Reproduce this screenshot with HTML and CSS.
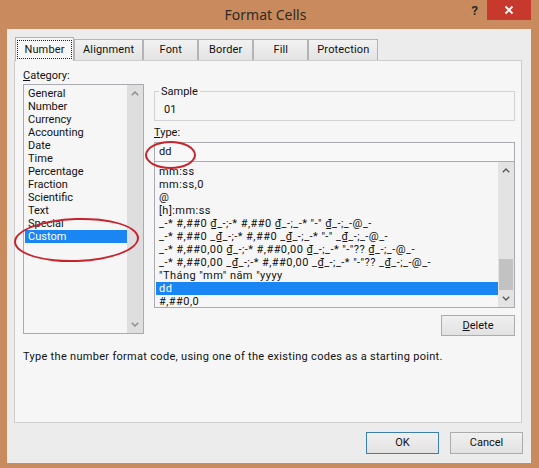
FILE: index.html
```html
<!DOCTYPE html>
<html lang="en">
<head>
<meta charset="utf-8">
<title>Format Cells</title>
<link rel="stylesheet" href="styles.css">
</head>
<body>
<div class="window">
  <div class="titlebar">
    <div class="title">Format Cells</div>
    <div class="controls">
      <span class="help">?</span>
      <span class="close"><svg width="10" height="10" viewBox="0 0 10 10"><path d="M1.5 1.5 L8.5 8.5 M8.5 1.5 L1.5 8.5" stroke="#fff" stroke-width="1.8" fill="none"/></svg></span>
    </div>
  </div>
  <div class="dialog">
    <div class="tabs">
      <div class="tab active"><span class="focus">Number</span></div>
      <div class="tab">Alignment</div>
      <div class="tab">Font</div>
      <div class="tab">Border</div>
      <div class="tab">Fill</div>
      <div class="tab">Protection</div>
    </div>
    <div class="panel">
      <div class="columns">
        <div class="left">
          <div class="label"><u>C</u>ategory:</div>
          <div class="listbox cat">
            <div class="items">
              <div class="item">General</div>
              <div class="item">Number</div>
              <div class="item">Currency</div>
              <div class="item">Accounting</div>
              <div class="item">Date</div>
              <div class="item">Time</div>
              <div class="item">Percentage</div>
              <div class="item">Fraction</div>
              <div class="item">Scientific</div>
              <div class="item">Text</div>
              <div class="item">Special</div>
              <div class="item selected">Custom</div>
            </div>
            <div class="scrollbar plain">
              <span class="arrow"><svg width="8" height="5" viewBox="0 0 8 5"><path d="M0.8 4.2 L4 1 L7.2 4.2" stroke="#8a8a8a" stroke-width="1.4" fill="none"/></svg></span>
              <span class="track"></span>
              <span class="arrow"><svg width="8" height="5" viewBox="0 0 8 5"><path d="M0.8 0.8 L4 4 L7.2 0.8" stroke="#8a8a8a" stroke-width="1.4" fill="none"/></svg></span>
            </div>
          </div>
        </div>
        <div class="right">
          <fieldset class="sample">
            <legend>Sample</legend>
            <div class="sample-value">01</div>
          </fieldset>
          <div class="label type-label"><u>T</u>ype:</div>
          <div class="input">dd</div>
          <div class="listbox fmt">
            <div class="items">
              <div class="item">mm:ss</div>
              <div class="item">mm:ss,0</div>
              <div class="item">@</div>
              <div class="item">[h]:mm:ss</div>
              <div class="item">_-* #,##0 ₫_-;-* #,##0 ₫_-;_-* "-" ₫_-;_-@_-</div>
              <div class="item">_-* #,##0 _₫_-;-* #,##0 _₫_-;_-* "-" _₫_-;_-@_-</div>
              <div class="item">_-* #,##0,00 ₫_-;-* #,##0,00 ₫_-;_-* "-"?? ₫_-;_-@_-</div>
              <div class="item">_-* #,##0,00 _₫_-;-* #,##0,00 _₫_-;_-* "-"?? _₫_-;_-@_-</div>
              <div class="item">"Tháng "mm" năm "yyyy</div>
              <div class="item selected">dd</div>
              <div class="item">#,##0,0</div>
            </div>
            <div class="scrollbar">
              <span class="arrow"><svg width="8" height="5" viewBox="0 0 8 5"><path d="M0.8 4.2 L4 1 L7.2 4.2" stroke="#5a5a5a" stroke-width="1.4" fill="none"/></svg></span>
              <span class="track"><span class="thumb"></span></span>
              <span class="arrow"><svg width="8" height="5" viewBox="0 0 8 5"><path d="M0.8 0.8 L4 4 L7.2 0.8" stroke="#5a5a5a" stroke-width="1.4" fill="none"/></svg></span>
            </div>
          </div>
          <div class="actions">
            <button class="btn delete" type="button"><u>D</u>elete</button>
          </div>
        </div>
      </div>
      <p class="hint">Type the number format code, using one of the existing codes as a starting point.</p>
      <div class="mark mark-custom"></div>
      <div class="mark mark-type"></div>
    </div>
    <div class="buttons">
      <button class="btn ok" type="button">OK</button>
      <button class="btn" type="button">Cancel</button>
    </div>
  </div>
</div>
</body>
</html>
```

FILE: styles.css
```css
* { box-sizing: border-box; }

html, body {
  margin: 0;
  padding: 0;
  background: #c98b5d;
}

body {
  font-family: Roboto, "Noto Sans", sans-serif;
  font-size: 11px;
  color: #111;
}

.window {
  width: 539px;
  height: 468px;
  background: #c98b5d;
  padding: 0 8px 5px 7px;
  display: flex;
  flex-direction: column;
}

.titlebar {
  height: 29px;
  flex: none;
  display: grid;
  grid-template-columns: 1fr auto 1fr;
  margin-right: -8px;
  margin-left: -7px;
  padding-right: 8px;
}

.title {
  grid-column: 2;
  font-family: "Noto Sans", sans-serif;
  font-size: 14px;
  line-height: 30px;
  color: #2e2a26;
}

.controls {
  grid-column: 3;
  display: flex;
  justify-content: flex-end;
  align-items: flex-start;
}

.help {
  font-weight: bold;
  font-size: 13px;
  line-height: 20px;
  color: #2a2a2a;
  margin-right: 9px;
  margin-top: 1px;
}

.close {
  width: 44px;
  height: 20px;
  background: #c7392d;
  display: flex;
  align-items: center;
  justify-content: center;
}

.dialog {
  flex: 1;
  background: #ececec;
  padding: 8px 8px 9px 7px;
  display: flex;
  flex-direction: column;
}

.tabs {
  display: flex;
  align-items: flex-end;
  height: 23px;
  padding-left: 3px;
  flex: none;
}

.tab {
  height: 21px;
  min-width: 55px;
  padding: 0 8px;
  border: 1px solid #b4b4b4;
  border-bottom: 0;
  background: linear-gradient(#f2f2f2, #e3e3e3);
  text-align: center;
  line-height: 19px;
  color: #111;
  letter-spacing: 0.15px;
}

.tab.active {
  height: 24px;
  margin-bottom: -1px;
  margin-left: -2px;
  background: #f6f6f6;
  position: relative;
  z-index: 1;
  padding: 2px 2px 0;
  width: 59px;
}

.focus {
  display: block;
  outline: 1px dotted #222;
  outline-offset: 0;
  line-height: 17px;
  margin-top: 1px;
}

.panel {
  flex: 1;
  position: relative;
  border: 1px solid #cdcdcd;
  background: #f6f6f6;
  padding: 8px 6px 0 8px;
  margin-right: 1px;
}

.columns {
  display: flex;
  gap: 10px;
}

.left {
  width: 121px;
  flex: none;
}

.right {
  flex: 1;
  display: flex;
  flex-direction: column;
}

.label {
  line-height: 13px;
}

.listbox {
  display: flex;
  border: 1px solid #a9abb1;
  background: #f6f6f6;
  overflow: hidden;
}

.listbox.cat {
  margin-top: 2px;
  height: 250px;
}

.items {
  flex: 1;
  padding-top: 2px;
  min-width: 0;
  overflow: hidden;
}

.item {
  line-height: 13px;
  height: 13px;
  padding-left: 3px;
  margin-left: 1px;
  white-space: nowrap;
}

.item.selected {
  background: #1a86f3;
  color: #fff;
}

.scrollbar {
  width: 16px;
  flex: none;
  display: flex;
  flex-direction: column;
  background: #e3e3e3;
}

.scrollbar.plain {
  background: #dedede;
}

.arrow {
  height: 17px;
  flex: none;
  display: flex;
  align-items: center;
  justify-content: center;
}

.track {
  flex: 1;
  display: flex;
  flex-direction: column;
  justify-content: flex-end;
}

.thumb {
  height: 31px;
  background: #c2c2c2;
  margin: 0 1px;
}

.sample {
  margin: 16px 0 0;
  padding: 5px 8px 4px;
  border: 1px solid #d3d3d3;
  min-width: 0;
}

.sample legend {
  padding: 0 2px;
  margin-left: -4px;
  line-height: 13px;
}

.sample-value {
  line-height: 13px;
  padding-left: 1px;
}

.type-label {
  margin-top: 5px;
}

.input {
  margin-top: 3px;
  height: 20px;
  border: 1px solid #a9abb1;
  background: #f8f8f8;
  padding-left: 4px;
  line-height: 18px;
}

.listbox.fmt {
  margin-top: -1px;
  height: 147px;
}

.listbox.fmt .items {
  padding-top: 3px;
}

.listbox.fmt .item {
  letter-spacing: 0.45px;
}

.actions {
  display: flex;
  justify-content: flex-end;
  margin-top: 7px;
}

.btn {
  font-family: inherit;
  font-size: 11px;
  color: #111;
  height: 22px;
  width: 74px;
  border: 1px solid #acacac;
  background: linear-gradient(#f0f0f0, #e2e2e2);
  padding: 0;
  line-height: 20px;
}

.delete {
  height: 21px;
}

.hint {
  margin: 14px 0 0;
  line-height: 13px;
  letter-spacing: 0.3px;
}

.buttons {
  display: flex;
  justify-content: flex-end;
  gap: 11px;
  margin-top: 9px;
  flex: none;
}

.ok {
  border-color: #3c7fb1;
}

.buttons .btn { width: 73px; }

.mark {
  position: absolute;
  border: 2.5px solid #c8232b;
  border-radius: 50%;
}

.mark-custom {
  left: -1px;
  top: 157px;
  width: 125px;
  height: 44px;
  transform: rotate(-2deg);
}

.mark-type {
  left: 130px;
  top: 80px;
  width: 51px;
  height: 28px;
}
```
